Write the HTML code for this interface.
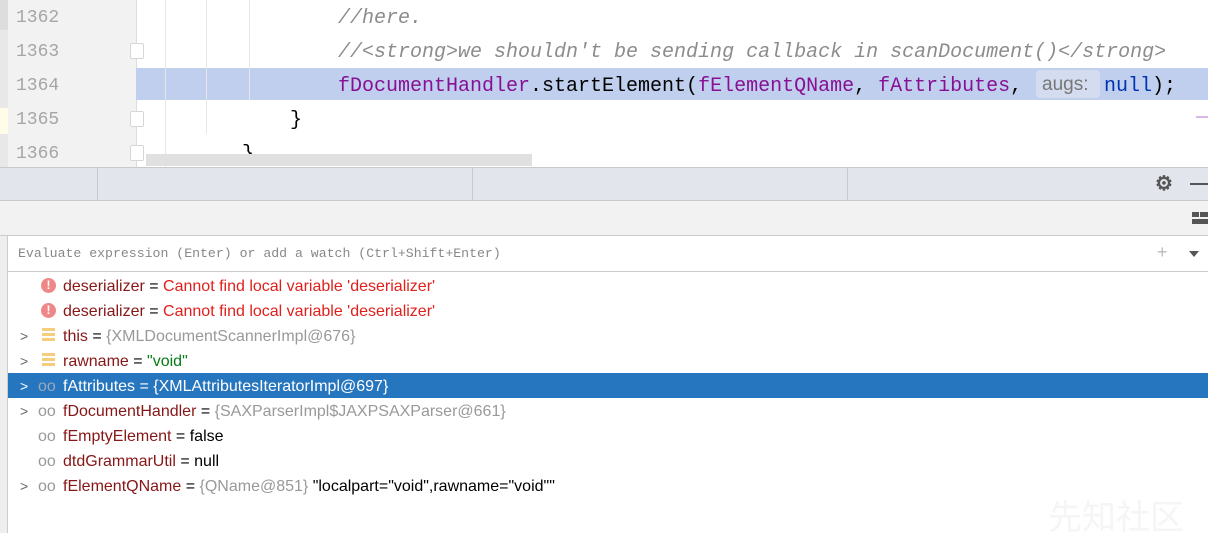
<!DOCTYPE html>
<html><head><meta charset="utf-8"><style>
*{margin:0;padding:0;box-sizing:border-box}
body{width:1208px;height:533px;overflow:hidden;background:#fff;position:relative;font-family:"Liberation Sans","Noto Sans CJK SC",sans-serif}
.abs{position:absolute}
.mono{font-family:"Liberation Mono",monospace;font-size:20px;white-space:pre}
.ln{position:absolute;left:16px;color:#a6a6a6;font-family:"Liberation Mono",monospace;font-size:18px}
.code{position:absolute;line-height:34px;height:34px}
.cm{color:#8c8c8c;font-style:italic}
.pu{color:#871094}
.kw{color:#0033b3}
.row{position:absolute;left:8px;right:0;height:25px;line-height:27px;font-size:16px;white-space:pre}
.arr{position:absolute;left:12px;top:0;color:#666;font-size:14px}
.nm{color:#871616}
.gr{color:#999}
.fold{position:absolute;left:130px;width:14px;height:16px;border:1px solid #d6d6d6;border-radius:2px;background:#fff}
</style></head><body>
<div class="abs" style="left:0;top:0;width:8px;height:167px;background:#e8e8e8"></div>
<div class="abs" style="left:0;top:0;width:8px;height:30px;background:#ddd"></div>
<div class="abs" style="left:0;top:108px;width:8px;height:26px;background:#fffde8"></div>
<div class="abs" style="left:8px;top:0;width:128px;height:167px;background:#f2f2f2"></div>
<div class="abs" style="left:136px;top:0;width:1px;height:167px;background:#ddd"></div>
<div class="abs" style="left:136px;top:68px;width:1072px;height:32px;background:#c0cfee"></div>
<div class="abs" style="left:165px;top:0;width:1px;height:167px;background:#e6e6e6"></div>
<div class="abs" style="left:206px;top:0;width:1px;height:134px;background:#e6e6e6"></div>
<div class="abs" style="left:249px;top:0;width:1px;height:100px;background:#e6e6e6"></div>
<div class="ln" style="top:8px">1362</div>
<div class="ln" style="top:42px">1363</div>
<div class="ln" style="top:76px">1364</div>
<div class="ln" style="top:110px">1365</div>
<div class="ln" style="top:144px">1366</div>
<div class="fold" style="top:43px"></div>
<div class="fold" style="top:111px"></div>
<div class="fold" style="top:145px"></div>
<div class="code mono cm" style="left:338px;top:2px">//here.</div>
<div class="code mono cm" style="left:338px;top:36px">//&lt;strong&gt;we shouldn't be sending callback in scanDocument()&lt;/strong&gt;</div>
<div class="code mono" style="left:338px;top:70px"><span class="pu">fDocumentHandler</span>.startElement(<span class="pu">fElementQName</span>, <span class="pu">fAttributes</span>, </div>
<div class="abs" style="left:1036px;top:70px;width:64px;height:28px;background:#d4dcef;border-radius:4px;color:#777;font-size:19px;line-height:30px;padding-left:6px">augs:</div>
<div class="code mono" style="left:1104px;top:70px"><span class="kw">null</span>);</div>
<div class="code mono" style="left:290px;top:104px">}</div>
<div class="code mono" style="left:242px;top:138px">}</div>
<div class="abs" style="left:146px;top:154px;width:386px;height:12px;background:#e0e0e0"></div>
<div class="abs" style="left:1196px;top:116px;width:12px;height:2px;background:#d8b8e8"></div>
<div class="abs" style="left:0;top:167px;width:1208px;height:34px;background:#e2e5ec;border-top:1px solid #c9c9c9;border-bottom:1px solid #c9c9c9"></div>
<div class="abs" style="left:97px;top:168px;width:1px;height:33px;background:#c9c9c9"></div>
<div class="abs" style="left:472px;top:168px;width:1px;height:33px;background:#c9c9c9"></div>
<div class="abs" style="left:847px;top:168px;width:1px;height:33px;background:#c9c9c9"></div>
<div class="abs" style="left:1155px;top:171px;color:#555;font-size:20px;font-weight:bold">⚙</div>
<div class="abs" style="left:1190px;top:183px;width:18px;height:2px;background:#555"></div>
<div class="abs" style="left:0;top:201px;width:1208px;height:35px;background:#f2f2f2;border-bottom:1px solid #ccc"></div>
<div class="abs" style="left:1192px;top:212px;width:7px;height:5px;background:#555"></div>
<div class="abs" style="left:1200px;top:212px;width:8px;height:5px;background:#555"></div>
<div class="abs" style="left:1192px;top:219px;width:16px;height:5px;background:#555"></div>
<div class="abs" style="left:0;top:236px;width:8px;height:297px;background:#eee;border-right:1px solid #ccc"></div>
<div class="abs" style="left:8px;top:271px;width:1200px;height:1px;background:#ccc"></div>
<div class="abs" style="left:18px;top:246px;color:#888;font-family:'Liberation Mono',monospace;font-size:13.2px;white-space:pre">Evaluate expression (Enter) or add a watch (Ctrl+Shift+Enter)</div>
<div class="abs" style="left:1157px;top:242px;color:#bbb;font-size:18px">+</div>
<div class="abs" style="left:1189px;top:251px;width:0;height:0;border-left:5px solid transparent;border-right:5px solid transparent;border-top:6px solid #555"></div>
<div class="row" style="top:273px"><span class="abs" style="left:33px;top:5px;width:15px;height:15px;border-radius:50%;background:#e88;color:#fff;font-size:12px;line-height:15px;text-align:center;font-weight:bold">!</span><span class="abs" style="left:55px"><span class="nm">deserializer</span> = <span style="color:#e0201c">Cannot find local variable 'deserializer'</span></span></div>
<div class="row" style="top:298px"><span class="abs" style="left:33px;top:5px;width:15px;height:15px;border-radius:50%;background:#e88;color:#fff;font-size:12px;line-height:15px;text-align:center;font-weight:bold">!</span><span class="abs" style="left:55px"><span class="nm">deserializer</span> = <span style="color:#e0201c">Cannot find local variable 'deserializer'</span></span></div>
<div class="row" style="top:323px"><span class="arr">&gt;</span><span class="abs" style="left:34px;top:5px;width:13px;height:15px;background:repeating-linear-gradient(#f6cd7d 0 3px,#fff 3px 5px)"></span><span class="abs" style="left:55px"><span class="nm">this</span> = <span class="gr">{XMLDocumentScannerImpl@676}</span></span></div>
<div class="row" style="top:348px"><span class="arr">&gt;</span><span class="abs" style="left:34px;top:5px;width:13px;height:15px;background:repeating-linear-gradient(#f6cd7d 0 3px,#fff 3px 5px)"></span><span class="abs" style="left:55px"><span class="nm">rawname</span> = <span style="color:#067d17">"void"</span></span></div>
<div class="row" style="top:373px;background:#2675bf;color:#fff"><span class="arr" style="color:#fff">&gt;</span><span class="abs" style="left:30px;color:#9ab">oo</span><span class="abs" style="left:55px">fAttributes = {XMLAttributesIteratorImpl@697}</span></div>
<div class="row" style="top:398px"><span class="arr">&gt;</span><span class="abs" style="left:30px;color:#999">oo</span><span class="abs" style="left:55px"><span class="nm">fDocumentHandler</span> = <span class="gr">{SAXParserImpl$JAXPSAXParser@661}</span></span></div>
<div class="row" style="top:423px"><span class="abs" style="left:30px;color:#999">oo</span><span class="abs" style="left:55px"><span class="nm">fEmptyElement</span> = false</span></div>
<div class="row" style="top:448px"><span class="abs" style="left:30px;color:#999">oo</span><span class="abs" style="left:55px"><span class="nm">dtdGrammarUtil</span> = null</span></div>
<div class="row" style="top:473px"><span class="arr">&gt;</span><span class="abs" style="left:30px;color:#999">oo</span><span class="abs" style="left:55px"><span class="nm">fElementQName</span> = <span class="gr">{QName@851}</span> "localpart="void",rawname="void""</span></div>
<div class="abs" style="left:1048px;top:490px;color:#f5f5f5;font-size:34px;font-family:'Noto Sans CJK SC',sans-serif">先知社区</div>
</body></html>
